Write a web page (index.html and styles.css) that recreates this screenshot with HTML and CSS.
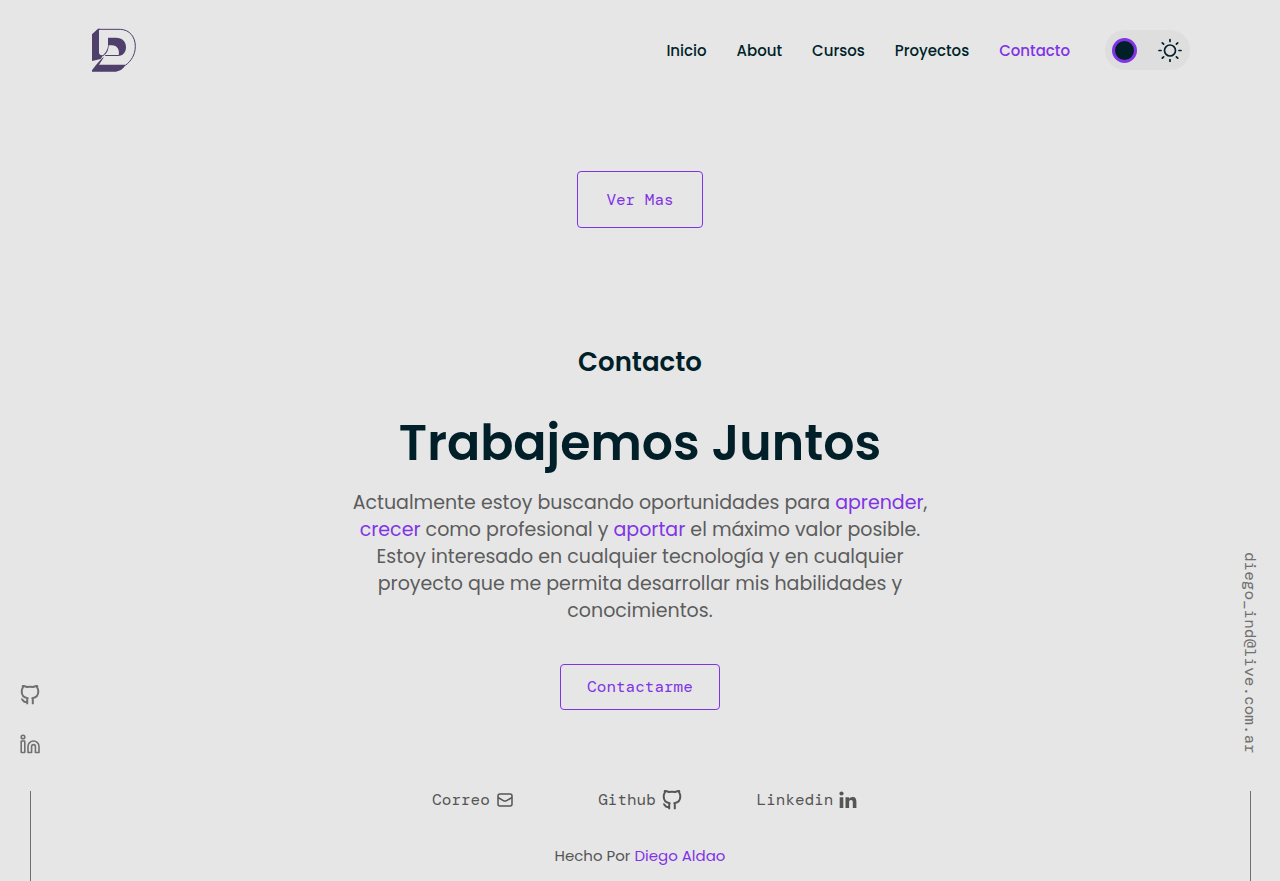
FILE: index.html
```html
<!DOCTYPE html>
<html lang="es">
<head>
<meta charset="utf-8">
<meta name="viewport" content="width=device-width, initial-scale=1">
<title>Diego Aldao</title>
<link rel="stylesheet" href="styles.css">
</head>
<body>
<svg width="0" height="0" class="sprite" aria-hidden="true">
  <symbol id="github-icon" viewBox="2.5 3.5 19 20"><path d="M3.300 17.500c1.300.1 1.900 2.400 3.300 2.900.9.300 1.900.2 2.600 0M9.200 22.800v-4.300c0-.7.1-1.300.5-1.800-3.500-.5-6-2.300-6-6.700 0-1.700.4-3 1.200-4-.3-.6-.3-1 0-1.600 1.300 0 2.800.5 3.900 1.100 2.100-.4 4.300-.4 6.400 0 1.100-.6 2.600-1.100 3.900-1.100.3.600.3 1 0 1.600.8 1 1.200 2.300 1.200 4 0 4.400-2.500 6.200-6 6.700.4.500.5 1.100.5 1.800v4.300" fill="none" stroke="currentColor" stroke-width="2" stroke-linejoin="round"/></symbol>
</svg>

<header class="header">
  <a class="logo" href="#inicio" aria-label="Inicio">
    <svg width="44" height="44" viewBox="36 25 132 132" aria-hidden="true">
      <path fill="#4f3f6b" d="M36 44 54 27H60L57 31V98C57 105 63 109 70 106L62 118 36 124Z"/>
      <path fill="#4f3f6b" d="M36 156V152L48 136 66 116 72 112 57 135H137C130 148 121 153 108 156Z"/>
      <path fill="#4f3f6b" d="M84 54H108C127 54 138 66 138 82C138 98 130 108 114 109H75L76 106H116C120 91 111 76 94 77L86 77C86 90 82 101 70 109L66 109C79 98 84 88 84 76Z"/>
      <path fill="none" stroke="#4f3f6b" stroke-width="3" d="M56 29H121C149 30 166 52 166 80C166 105 153 125 136 137"/>
    </svg>
  </a>
  <nav class="nav">
    <a href="#inicio">Inicio</a>
    <a href="#about">About</a>
    <a href="#cursos">Cursos</a>
    <a href="#proyectos">Proyectos</a>
    <a class="active" href="#contacto">Contacto</a>
  </nav>
  <button class="toggle" type="button" aria-label="Cambiar tema">
    <span class="knob"></span>
    <svg width="24" height="24" viewBox="0 0 24 24" fill="none" stroke="#001f29" stroke-width="1.700" stroke-linecap="round" aria-hidden="true">
      <circle cx="12" cy="12.500" r="5.500"/>
      <path d="M12 1.500v2M12 21.500v2M1 12.500h2M21 12.500h2M4.300 4.800l1.300 1.300M18.400 18.900l1.300 1.300M4.300 20.200l1.300-1.300M18.400 6.100l1.300-1.300"/>
    </svg>
  </button>
</header>

<div class="page">
  <aside class="rail">
    <a href="#github" aria-label="Github"><svg width="20" height="20" aria-hidden="true"><use href="#github-icon"/></svg></a>
    <a href="#linkedin" aria-label="Linkedin">
      <svg width="20" height="20" viewBox="0 0 20 20" fill="none" stroke="currentColor" stroke-width="1.600" aria-hidden="true">
        <circle cx="3" cy="3" r="1.800"/><rect x="1.200" y="7" width="3.600" height="11.500" rx=".5"/>
        <path d="M8 18.500V12.500a5.500 5.500 0 0 1 11 0v6h-3.600v-6a1.900 1.900 0 0 0-3.800 0v6Z" stroke-linejoin="round"/>
      </svg>
    </a>
    <span class="line"></span>
  </aside>

  <main class="main">
    <button class="btn btn-large" type="button">Ver Mas</button>
    <section class="contact" id="contacto">
      <h2>Contacto</h2>
      <h1>Trabajemos Juntos</h1>
      <p>Actualmente estoy buscando oportunidades para <em>aprender</em>, <em>crecer</em> como profesional y <em>aportar</em> el máximo valor posible. Estoy interesado en cualquier tecnología y en cualquier proyecto que me permita desarrollar mis habilidades y conocimientos.</p>
      <a class="btn" href="mailto:diego_ind@live.com.ar">Contactarme</a>
    </section>
    <footer class="footer">
      <div class="links">
        <a href="#correo">Correo
          <svg width="18" height="18" viewBox="0 0 18 18" fill="none" stroke="currentColor" stroke-width="1.500" aria-hidden="true"><rect x="2" y="3" width="14" height="12" rx="2"/><path d="M2 6.500l5.800 3.300q1.200.6 2.400 0L16 6.500"/></svg>
        </a>
        <a href="#github">Github <svg width="20" height="20" aria-hidden="true"><use href="#github-icon"/></svg></a>
        <a href="#linkedin">Linkedin
          <svg width="18" height="18" viewBox="0 0 18 18" fill="currentColor" aria-hidden="true"><circle cx="2.500" cy="2.500" r="2.100"/><path d="M.7 6.200h3.600V17H.7ZM6.500 6.200H10v1.500c.7-1.100 1.900-1.800 3.500-1.800 3.200 0 3.900 2.100 3.900 5V17h-3.600v-5.300c0-1.500-.2-2.700-1.800-2.700s-1.900 1.200-1.900 2.600V17H6.500Z"/></svg>
        </a>
      </div>
      <p>Hecho Por <a href="#inicio">Diego Aldao</a></p>
    </footer>
  </main>

  <aside class="rail">
    <a class="email" href="mailto:diego_ind@live.com.ar">diego_ind@live.com.ar</a>
    <span class="line"></span>
  </aside>
</div>
</body>
</html>
```
FILE: styles.css
```css
* { box-sizing: border-box; }

body {
  margin: 0;
  min-height: 100vh;
  display: flex;
  flex-direction: column;
  background: #e6e6e6;
  color: #001f29;
  font-family: Poppins, Inter, sans-serif;
}

a { color: inherit; text-decoration: none; }
svg { display: block; }
.sprite { position: absolute; }

.header {
  display: flex;
  align-items: center;
  height: 100px;
  padding: 0 90px 0 92px;
}

.nav {
  display: flex;
  gap: 30px;
  margin-left: auto;
  margin-right: 35px;
  font-size: 15px;
  font-weight: 500;
}

.nav .active { color: #8133e6; }

.toggle {
  display: flex;
  align-items: center;
  justify-content: space-between;
  width: 85px;
  height: 40px;
  padding: 0 8px 0 7px;
  border: 0;
  border-radius: 20px;
  background: #dedede;
}

.knob {
  width: 25px;
  height: 25px;
  border: 3px solid #8133e6;
  border-radius: 50%;
  background: #001f29;
}

.page {
  flex: 1;
  display: grid;
  grid-template-columns: 60px 1fr 60px;
}

.rail {
  display: flex;
  flex-direction: column;
  align-items: center;
  justify-content: flex-end;
  gap: 29px;
  color: #707070;
}

.line {
  width: 1px;
  height: 90px;
  margin-top: 8px;
  background: #707070;
}

.email {
  writing-mode: vertical-rl;
  font: 16px/20px "DM Mono", "Liberation Mono", monospace;
}

.main {
  display: flex;
  flex-direction: column;
  align-items: center;
  padding-top: 71px;
  text-align: center;
}

.btn {
  display: inline-block;
  padding: 12px 26px;
  border: 1px solid #8133e6;
  border-radius: 4px;
  background: none;
  color: #8133e6;
  font: 16px/20px "DM Mono", "Liberation Mono", monospace;
}

.btn-large {
  padding: 17px 28px;
  line-height: 21px;
}

.contact {
  max-width: 600px;
  padding: 114px 10px 0;
}

h2 {
  margin: 0 0 33px;
  font-size: 26px;
  font-weight: 600;
  line-height: 40px;
}

h1 {
  margin: 0 0 18px;
  font-size: 49px;
  font-weight: 600;
  line-height: 56px;
}

.contact p {
  margin: 0 0 40px;
  color: #5c5c5c;
  font-size: 19px;
  line-height: 27px;
}

em { color: #8133e6; font-style: normal; }

.footer { color: #555; }

.links {
  display: grid;
  grid-template-columns: repeat(3, 167px);
  padding-top: 80px;
  font: 16px/20px "DM Mono", "Liberation Mono", monospace;
}

.links a {
  display: flex;
  align-items: center;
  justify-content: center;
  gap: 6px;
}

.footer p {
  margin: 35px 0 15px;
  font-size: 15px;
  line-height: 21px;
}

.footer p a { color: #8133e6; }
```
